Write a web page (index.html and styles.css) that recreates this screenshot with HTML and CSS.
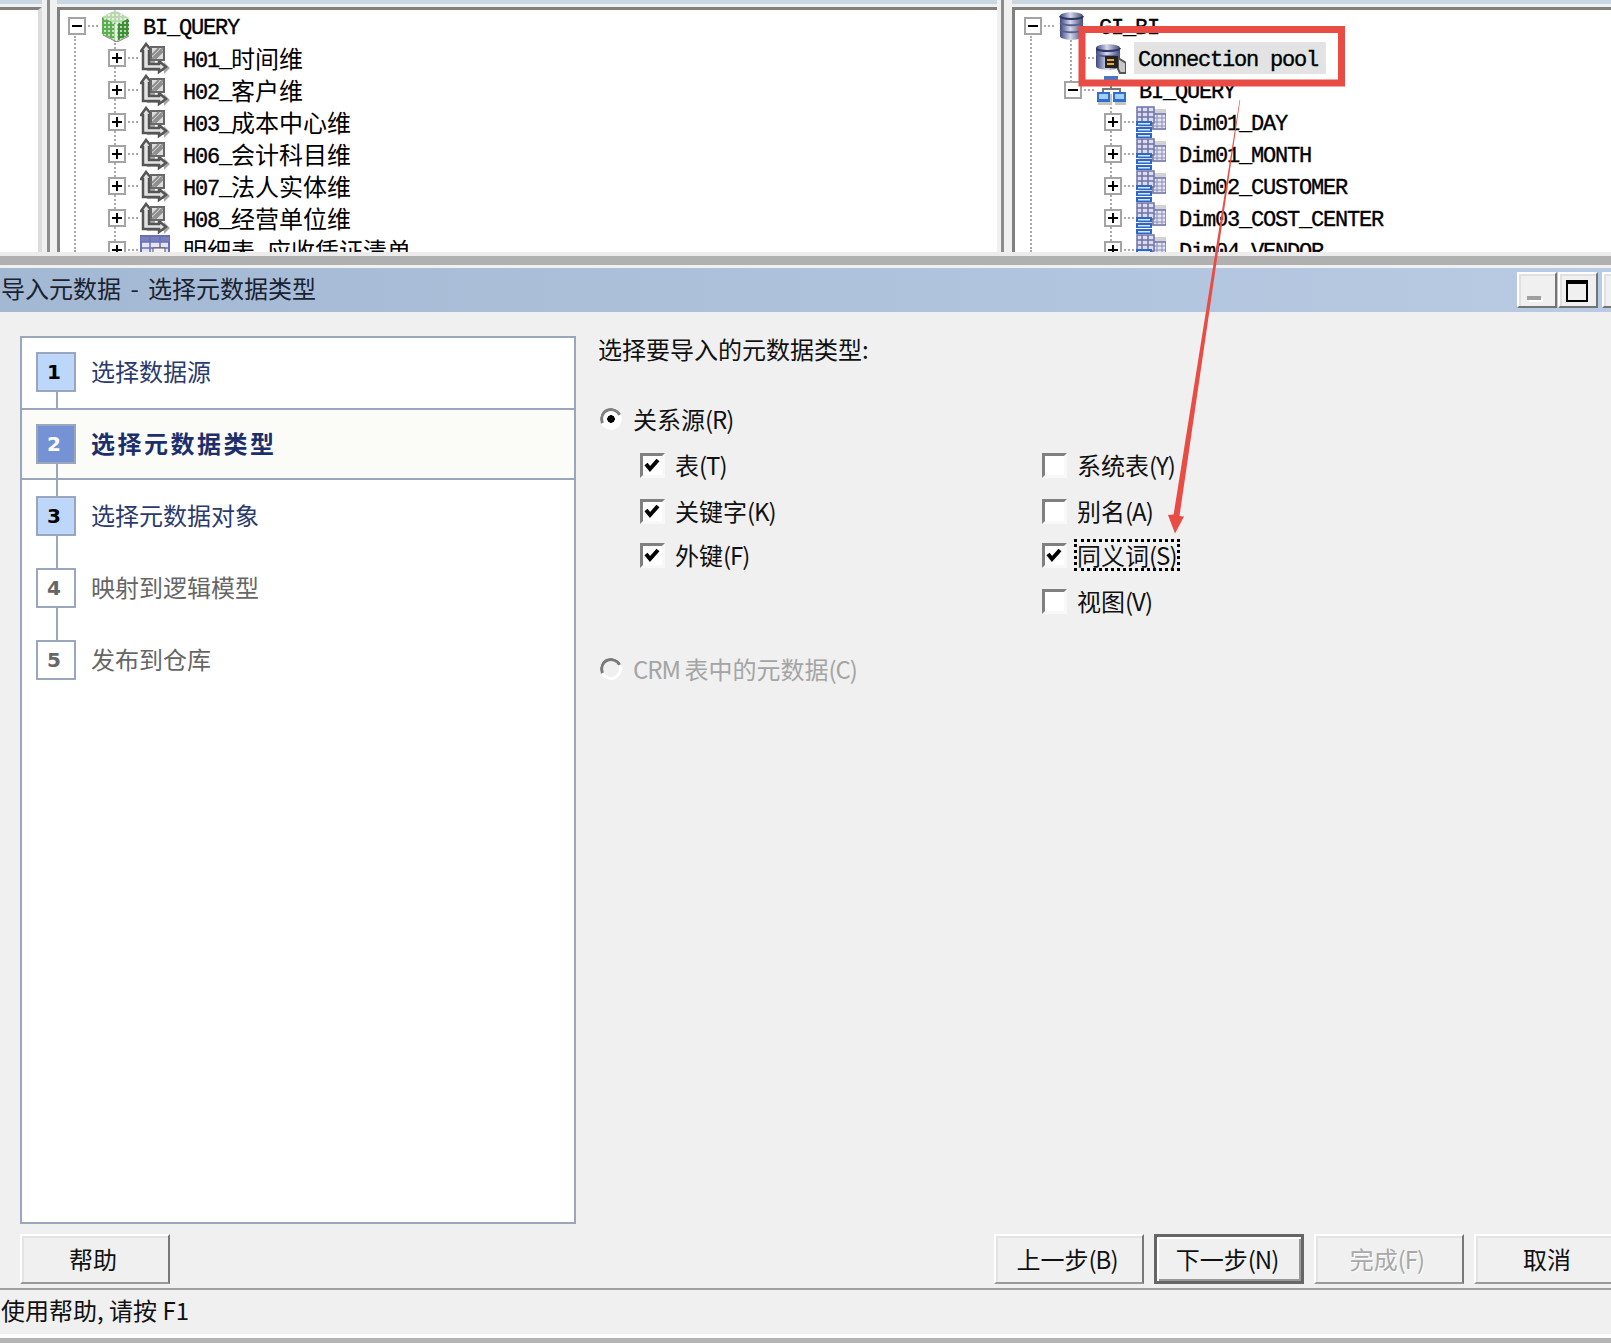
FILE: index.html
```html
<!DOCTYPE html>
<html>
<head>
<title>导入元数据</title>
<meta charset="utf-8" />
<link rel="stylesheet" href="styles.css">
</head>
<body>
<svg class="defs" width="0" height="0">
  <defs>
    <linearGradient id="can" x1="0" x2="1" y1="0" y2="0">
      <stop offset="0" stop-color="#3b4680" /><stop offset=".45" stop-color="#d5d9ea" /><stop offset="1" stop-color="#454a78" />
    </linearGradient>
    <pattern id="dots" width="4" height="4" patternUnits="userSpaceOnUse">
      <rect width="2" height="2" fill="#fff" opacity=".65" />
    </pattern>
    <symbol id="ic-cube" viewBox="0 0 30 32">
      <path d="M17 31l12-6V8l-12 6z" fill="#3f8f36" />
      <path d="M2 7l15 7v17L2 24z" fill="#5cae4f" />
      <path d="M2 7l13-7 14 8-12 6z" fill="#b9d8ae" />
      <path d="M2 7l13-7 14 8v17l-12 6-15-7z" fill="url(#dots)" />
      <path d="M16 14v17" stroke="#e8f6e2" stroke-width="3" />
      <path d="M3 25l14 7 12-6" fill="none" stroke="#777" />
    </symbol>
    <symbol id="ic-hier" viewBox="0 0 30 30">
      <path d="M7 10l5-7 6 7h-3v12h9v-3l6 6-6 6v-3H7z" fill="#a8a8a8" />
      <path d="M1 8l5-7 6 7H9v13h10v-3l7 6-7 5v-3H3V8z" fill="#e4e4e4" stroke="#555" stroke-width="2.500" />
      <path d="M11 4h13v13H11z" fill="#ddd" stroke="#666" stroke-width="2" />
      <path d="M12 16L23 5M15 16l8-8M12 12l7-7" stroke="#8d8d8d" stroke-width="2" />
    </symbol>
    <symbol id="ic-table" viewBox="0 0 30 30">
      <path d="M1 1h28v28H1z" fill="#e4e4f4" stroke="#6a70b4" stroke-width="2" />
      <path d="M1 2h28v5H1z" fill="#7a80bc" />
      <path d="M10 1v28M20 1v28M1 7h28M1 13h28" stroke="#6a70b4" stroke-width="1.500" />
      <path d="M13 13h12v6H13z" fill="#f4f4f4" stroke="#555" />
    </symbol>
    <symbol id="ic-can" viewBox="0 0 30 30">
      <path d="M4 5c0-5 23-5 23 0v20c0 5-23 5-23 0z" fill="url(#can)" />
      <path d="M4 5c0 4 23 4 23 0" fill="none" stroke="#2f3768" stroke-width="2" />
      <path d="M4 12c5 3 18 3 23 0M4 19c5 3 18 3 23 0" fill="none" stroke="#59608f" stroke-width="2" />
    </symbol>
    <symbol id="ic-pool" viewBox="0 0 30 30">
      <path d="M0 5c0-5 24-5 24 0v18c0 5-24 5-24 0z" fill="url(#can)" />
      <path d="M0 5c0 4 24 4 24 0" fill="none" stroke="#2f3768" stroke-width="2" />
      <path d="M0 11c5 3 19 3 24 0" fill="none" stroke="#59608f" stroke-width="2" />
      <path d="M22 15l8 5v10h-6l-2-4z" fill="#c8c8c8" stroke="#555" stroke-width="2" />
      <path d="M9 13h13v12H9z" fill="#222" />
      <path d="M11 16h7v2h-7zM11 20h7v2h-7z" fill="#f0a828" />
    </symbol>
    <symbol id="ic-tree" viewBox="0 0 30 30">
      <path d="M8 1h14v7H8z" fill="#3d78cc" />
      <path d="M15 8v6M7 17v-3h17v3" fill="none" stroke="#777" stroke-width="2" />
      <path d="M2 19h14v11H2zM19 19h13v11H19z" fill="#c4c4c4" />
      <path d="M1 17h13v10H1zM17 17h13v10H17z" fill="#2f6fd0" />
      <path d="M3 19h9v5H3zM19 19h9v5h-9z" fill="#a8cdf5" />
    </symbol>
    <symbol id="ic-dim" viewBox="0 0 30 32">
      <path d="M3 3h27v21H3z" fill="#b4b4b4" opacity=".6" />
      <path d="M17 8h13v15H17z" fill="#e4e4f2" stroke="#6e72a8" stroke-width="1.500" />
      <path d="M21 8v15M26 8v15M17 12h13M17 16h13M17 20h13" stroke="#8a8ebc" />
      <path d="M1 1h17v16H1z" fill="#dcdcee" stroke="#6e72a8" stroke-width="1.500" />
      <path d="M6 1v16M12 1v16M1 6h17M1 11h17" stroke="#6e72a8" stroke-width="1.500" />
      <path d="M0 15h16v5H0zM0 21h16v5H0zM0 27h16v5H0z" fill="#2f68c4" />
      <path d="M2 17h12v1.500H2zM2 23h12v1.500H2zM2 29h12v1.500H2z" fill="#d4e6fa" />
    </symbol>
    <symbol id="ic-tick" viewBox="0 0 25 25">
      <path d="M6 11l4 5 8-9" fill="none" stroke="#000" stroke-width="4" />
    </symbol>
  </defs>
</svg>

<div class="page">
  <div class="top">
    <div class="pane pane-stub"><div class="pane-in"></div></div>
    <div class="split"></div>
    <div class="pane pane-left">
      <div class="pane-in tree">
        <i class="guide guide-a"></i><i class="guide guide-b"></i>
        <div class="row"><b class="exp minus"></b><i class="dash"></i><svg class="icon"><use href="#ic-cube" /></svg><span class="label">BI_QUERY</span></div>
        <div class="row l1"><b class="exp plus"></b><i class="dash"></i><svg class="icon"><use href="#ic-hier" /></svg><span class="label">H01_<span class="zh">时间维</span></span></div>
        <div class="row l1"><b class="exp plus"></b><i class="dash"></i><svg class="icon"><use href="#ic-hier" /></svg><span class="label">H02_<span class="zh">客户维</span></span></div>
        <div class="row l1"><b class="exp plus"></b><i class="dash"></i><svg class="icon"><use href="#ic-hier" /></svg><span class="label">H03_<span class="zh">成本中心维</span></span></div>
        <div class="row l1"><b class="exp plus"></b><i class="dash"></i><svg class="icon"><use href="#ic-hier" /></svg><span class="label">H06_<span class="zh">会计科目维</span></span></div>
        <div class="row l1"><b class="exp plus"></b><i class="dash"></i><svg class="icon"><use href="#ic-hier" /></svg><span class="label">H07_<span class="zh">法人实体维</span></span></div>
        <div class="row l1"><b class="exp plus"></b><i class="dash"></i><svg class="icon"><use href="#ic-hier" /></svg><span class="label">H08_<span class="zh">经营单位维</span></span></div>
        <div class="row l1"><b class="exp plus"></b><i class="dash"></i><svg class="icon"><use href="#ic-table" /></svg><span class="label"><span class="zh">明细表</span>_<span class="zh">应收凭证清单</span></span></div>
      </div>
    </div>
    <div class="split"></div>
    <div class="pane pane-right">
      <div class="pane-in tree tree-r">
        <i class="guide guide-c"></i><i class="guide guide-d"></i><i class="guide guide-e"></i>
        <div class="row"><b class="exp minus"></b><i class="dash"></i><svg class="icon"><use href="#ic-can" /></svg><span class="label">GI_BI</span></div>
        <div class="row l1"><b class="exp none"></b><i class="dash"></i><svg class="icon"><use href="#ic-pool" /></svg><span class="label sel">Connection pool</span></div>
        <div class="row l1"><b class="exp minus"></b><i class="dash"></i><svg class="icon"><use href="#ic-tree" /></svg><span class="label">BI_QUERY</span></div>
        <div class="row l2"><b class="exp plus"></b><i class="dash"></i><svg class="icon"><use href="#ic-dim" /></svg><span class="label">Dim01_DAY</span></div>
        <div class="row l2"><b class="exp plus"></b><i class="dash"></i><svg class="icon"><use href="#ic-dim" /></svg><span class="label">Dim01_MONTH</span></div>
        <div class="row l2"><b class="exp plus"></b><i class="dash"></i><svg class="icon"><use href="#ic-dim" /></svg><span class="label">Dim02_CUSTOMER</span></div>
        <div class="row l2"><b class="exp plus"></b><i class="dash"></i><svg class="icon"><use href="#ic-dim" /></svg><span class="label">Dim03_COST_CENTER</span></div>
        <div class="row l2"><b class="exp plus"></b><i class="dash"></i><svg class="icon"><use href="#ic-dim" /></svg><span class="label">Dim04_VENDOR</span></div>
      </div>
    </div>
  </div>

  <div class="band"></div>

  <div class="titlebar">
    <span class="title">导入元数据 - 选择元数据类型</span>
    <div class="win-btns">
      <div class="win-btn"><i class="min-mark"></i></div>
      <div class="win-btn"><i class="max-mark"></i></div>
      <div class="win-btn"></div>
    </div>
  </div>

  <div class="main">
    <div class="steps">
      <div class="step step-1 done"><span class="num">1</span><span class="step-text">选择数据源</span></div>
      <div class="step step-2 current"><span class="num">2</span><span class="step-text">选择元数据类型</span></div>
      <div class="step step-3 done"><span class="num">3</span><span class="step-text">选择元数据对象</span></div>
      <div class="step todo"><span class="num">4</span><span class="step-text">映射到逻辑模型</span></div>
      <div class="step todo last"><span class="num">5</span><span class="step-text">发布到仓库</span></div>
    </div>

    <div class="form">
      <div class="heading">选择要导入的元数据类型:</div>
      <div class="opt radio-opt"><i class="radio on"></i><span>关系源<span class="key">(R)</span></span></div>
      <div class="checks">
        <div class="opt"><i class="check"><svg><use href="#ic-tick" /></svg></i><span>表<span class="key">(T)</span></span></div>
        <div class="opt"><i class="check"><svg><use href="#ic-tick" /></svg></i><span>关键字<span class="key">(K)</span></span></div>
        <div class="opt"><i class="check"><svg><use href="#ic-tick" /></svg></i><span>外键<span class="key">(F)</span></span></div>
        <div></div>
        <div class="opt"><i class="check"></i><span>系统表<span class="key">(Y)</span></span></div>
        <div class="opt"><i class="check"></i><span>别名<span class="key">(A)</span></span></div>
        <div class="opt"><i class="check"><svg><use href="#ic-tick" /></svg></i><span class="focus">同义词<span class="key">(S)</span></span></div>
        <div class="opt"><i class="check"></i><span>视图<span class="key">(V)</span></span></div>
      </div>
      <div class="opt radio-opt crm"><i class="radio"></i><span><span class="key">CRM </span>表中的元数据<span class="key">(C)</span></span></div>
    </div>
  </div>

  <div class="actions">
    <button class="btn">帮助</button>
    <div class="nav-btns">
      <button class="btn">上一步<span class="key">(B)</span></button>
      <button class="btn default">下一步<span class="key">(N)</span></button>
      <button class="btn off">完成<span class="key">(F)</span></button>
      <button class="btn">取消</button>
    </div>
  </div>

  <div class="status">使用帮助, 请按 F1</div>
  <div class="foot"></div>

  <!-- red markup drawn over the screenshot -->
  <svg class="markup" width="1611" height="1343">
    <rect x="1082" y="29.500" width="259.500" height="53.500" fill="none" stroke="#e84c45" stroke-width="7" />
    <path d="M1239.600 100h.6l-60.700 416 4.500.5-9 17-7-18.500 5.600-.5z" fill="#e84c45" />
  </svg>
</div>
</body>
</html>
```

FILE: styles.css
```css
html, body {
  margin:0;
  padding:0;
}

body {
  font-family:"Noto Sans CJK SC", sans-serif;
  font-size:24px;
  color:#111;
  background:#f0f0f0;
}

i, b {
  display:block;
  font-style:normal;
}

.defs {
  position:absolute;
}

.page {
  position:relative;
  width:1611px;
  height:1343px;
  overflow:hidden;
  display:flex;
  flex-direction:column;
}

/* trees at the top */
.top {
  display:flex;
  height:252px;
  flex:none;
  overflow:hidden;
}

.pane {
  border-top:4px solid #c9d7e3;
  padding-top:3px;
  box-sizing:border-box;
  height:252px;
}

.pane-stub { width:42px; }
.pane-left { width:940px; }
.pane-right { flex:1; }

.pane-in {
  height:100%;
  background:#fff;
  border-top:3px solid #808080;
  box-sizing:border-box;
}

.pane-stub .pane-in {
  border-right:4px solid #dcdcdc;
  box-sizing:content-box;
}

.pane-left .pane-in, .pane-right .pane-in {
  border-left:3px solid #808080;
}

.split {
  width:11px;
  flex:none;
  box-sizing:border-box;
  border-left:3px solid #8c8c8c;
  margin-left:4px;
}

.pane-stub + .split {
  margin-left:5px;
  width:10px;
}

.tree {
  position:relative;
  padding-left:8px;
  overflow:hidden;
}

.tree-r {
  padding-left:9px;
}

.row {
  position:relative;
  display:flex;
  align-items:center;
  height:32px;
}

.l1 { padding-left:40px; }
.l2 { padding-left:80px; }

.exp {
  position:relative;
  width:18px;
  height:18px;
  flex:none;
  box-sizing:border-box;
  border:2px solid #a4a4a4;
  background:#fff;
}

.exp.none {
  visibility:hidden;
}

.exp::before, .plus::after {
  content:"";
  position:absolute;
  background:#000;
  left:2px;
  top:6px;
  width:10px;
  height:2px;
}

.plus::after {
  left:6px;
  top:2px;
  width:2px;
  height:10px;
}

.dash {
  width:10px;
  margin:0 2px;
  border-top:2px dotted #aaa;
}

.icon {
  width:30px;
  height:32px;
  flex:none;
}

.label {
  margin-left:13px;
  padding-top:6px;
  font-family:"Liberation Mono", "Noto Sans CJK SC", monospace;
  font-size:22px;
  letter-spacing:-1.2px;
  line-height:26px;
  white-space:pre;
  color:#000;
  -webkit-text-stroke:.35px #000;
}

.pane-left .l1 .label {
  padding-top:4px;
  line-height:28px;
}

.zh {
  position:relative;
  top:1px;
  font-family:"Noto Sans CJK SC", sans-serif;
  font-size:24px;
  line-height:1;
  letter-spacing:0;
  -webkit-text-stroke:0;
}

.sel {
  position:relative;
  margin-left:8px;
  padding:6px 8px 0 4px;
  background:#e3e3e3;
}

.guide {
  position:absolute;
  bottom:0;
  border-left:2px dotted #aaa;
}

.guide-a { left:14px; top:26px; }
.guide-b { left:54px; top:30px; }
.guide-c { left:15px; top:26px; }
.guide-d { left:55px; top:26px; height:46px; }
.guide-e { left:95px; top:90px; }

/* dialog title */
.band {
  height:16px;
  flex:none;
  box-sizing:border-box;
  border-top:4px solid #ececec;
  border-bottom:3px solid #f0f0f0;
  background:#b0b0b0;
}

.titlebar {
  height:44px;
  flex:none;
  display:flex;
  align-items:center;
  justify-content:space-between;
  padding-left:1px;
  background:linear-gradient(to right, #a3b8d3, #b9cbe3);
  overflow:hidden;
}

.title {
  padding-bottom:6px;
  color:#1a2230;
  white-space:pre;
  word-spacing:4px;
}

.win-btns {
  display:flex;
  gap:1px;
  margin-right:-31px;
  align-self:flex-start;
  padding-top:4px;
}

.win-btn {
  position:relative;
  width:40px;
  height:36px;
  box-sizing:border-box;
  border:2px solid;
  border-color:#fff #747474 #747474 #fff;
  box-shadow:inset 2px 2px #e0e0e0;
  background:#f0f0f0;
}

.win-btn:last-child {
  margin-left:3px;
}

.min-mark {
  position:absolute;
  left:8px;
  bottom:6px;
  width:14px;
  height:4px;
  background:#a0a0a0;
  box-shadow:2px 2px #fff;
}

.max-mark {
  position:absolute;
  left:6px;
  top:6px;
  width:22px;
  height:22px;
  box-sizing:border-box;
  border:2px solid #000;
  border-top-width:4px;
}

/* wizard */
.main {
  flex:1;
  display:flex;
  padding:24px 0 10px 20px;
  min-height:0;
}

.steps {
  width:556px;
  flex:none;
  box-sizing:border-box;
  border:2px solid #9aa6bc;
  background:#fff;
}

.step {
  position:relative;
  display:flex;
  align-items:center;
  height:40px;
  padding:14px 14px 16px;
  color:#2a3a6e;
}

.step-text {
  margin-top:-4px;
}

.step-1 {
  border-bottom:2px solid #9aa6bc;
}

.step-2 {
  padding-bottom:14px;
  border-bottom:2px solid #9aa6bc;
  background:#fbfcf7;
  font-weight:bold;
  letter-spacing:2.500px;
  color:#1c2f6c;
}

.step-3 {
  padding-top:16px;
  padding-bottom:32px;
}

.todo {
  padding-top:0;
  padding-bottom:32px;
  color:#666;
}

.num {
  position:relative;
  z-index:1;
  width:40px;
  height:40px;
  flex:none;
  box-sizing:border-box;
  border:2px solid #9aa6bc;
  padding-right:4px;
  margin-right:15px;
  background:#fff;
  font:bold 20px/36px "DejaVu Sans", sans-serif;
  letter-spacing:0;
  text-align:center;
  color:#666;
}

.done .num {
  background:#bdd7fb;
  color:#000;
}

.current .num {
  background:#7492d4;
  color:#fff;
}

.step::after {
  content:"";
  position:absolute;
  left:34px;
  top:50px;
  width:2px;
  height:40px;
  background:#9aa6bc;
}

.step-3::after { top:54px; height:34px; }
.todo::after { top:38px; height:36px; }
.last::after { display:none; }

/* right side of the wizard */
.form {
  flex:1;
  padding-left:22px;
}

.heading {
  margin-top:-3px;
  line-height:32px;
}

.key {
  letter-spacing:-1px;
}

.opt {
  display:flex;
  align-items:center;
  height:25px;
  line-height:25px;
}

.radio-opt {
  height:23px;
  margin:42px 0 0 2px;
}

.radio-opt > span {
  margin-left:11px;
}

.radio {
  width:22px;
  height:22px;
  flex:none;
  box-sizing:border-box;
  border:3px solid;
  border-color:#808080 #fff #fff #808080;
  border-radius:50%;
  transform:rotate(20deg);
  background:#fff radial-gradient(circle, #000 3.5px, transparent 4px);
}

.crm {
  margin-top:44px;
  color:#a4a4a4;
}

.crm .radio {
  background:#f0f0f0;
  border-color:#7a7a7a #fff #fff #7a7a7a;
}

.checks {
  display:grid;
  grid-template-rows:46px 44px 46px 25px;
  grid-template-columns:402px 1fr;
  grid-auto-flow:column;
  margin:22px 0 0 42px;
}

.check {
  width:25px;
  height:25px;
  flex:none;
  box-sizing:border-box;
  margin:2px 10px 0 0;
  border:3px solid;
  border-color:#808080 #f8f8f8 #f8f8f8 #808080;
  background:#fff;
}

.check svg {
  display:block;
  width:25px;
  height:25px;
  margin:-3px;
}

.focus {
  margin-left:-3px;
  border:3px dotted #000;
  line-height:26px;
}

/* buttons and status */
.actions {
  display:flex;
  justify-content:space-between;
  flex:none;
  padding-left:20px;
  margin-right:-13px;
}

.nav-btns {
  display:flex;
  gap:10px;
}

.btn {
  width:150px;
  height:50px;
  padding:0 4px 2px 0;
  box-sizing:border-box;
  border:2px solid;
  border-color:#fff #777 #999 #fff;
  box-shadow:inset 2px 2px #e3e3e3;
  background:#f0f0f0;
  font:24px "Noto Sans CJK SC", sans-serif;
  color:#111;
}

.default {
  border:3px solid #666;
  box-shadow:inset 2px 2px #fff, inset -2px -2px #999;
}

.off {
  color:#a8a8a8;
  text-shadow:1px 1px #fff;
}

.status {
  height:44px;
  flex:none;
  margin-top:4px;
  box-sizing:content-box;
  border-top:2px solid #a0a0a0;
  padding-left:1px;
  line-height:40px;
  white-space:pre;
}

.foot {
  height:9px;
  flex:none;
  box-sizing:border-box;
  border-top:4px solid #fff;
  background:#b4b4b4;
}

.markup {
  position:absolute;
  left:0;
  top:0;
  pointer-events:none;
}
```
